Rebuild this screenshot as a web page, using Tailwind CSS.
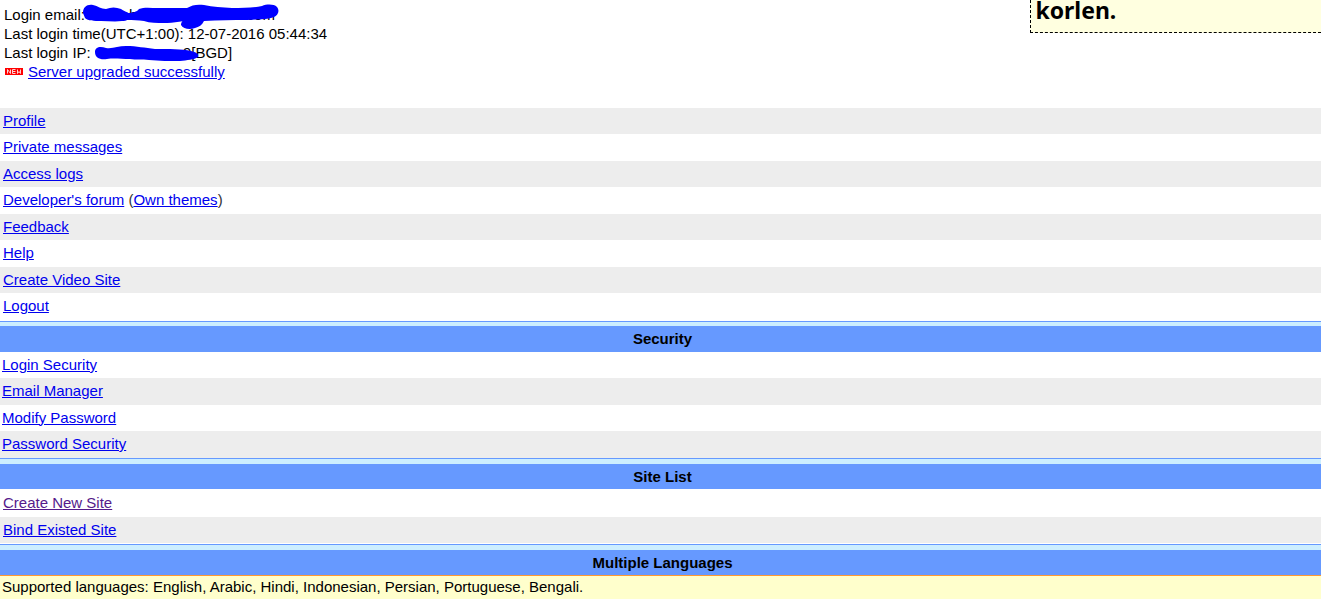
<!DOCTYPE html>
<html lang="en">

<head>
    <meta charset="UTF-8">
    <meta name="viewport" content="width=device-width, initial-scale=1.0">
    <title>My Account</title>
    <script src="https://cdn.jsdelivr.net/npm/@tailwindcss/browser@4"></script>
</head>

<body class="bg-white text-black text-[15px] leading-[19px] font-['Liberation_Sans',Arial,sans-serif]">
    <!-- Account info -->
    <header class="flex justify-between items-start min-h-[108px]">
        <div class="relative pt-[5px] pl-[4px]">
            <p>Login email: <span class="pl-[40px]">b</span><span class="pl-[105px]">.com</span></p>
            <p>Last login time(UTC+1:00): 12-07-2016 05:44:34</p>
            <p>Last login IP: <span class="pl-[88px]">9</span>[BGD]</p>
            <p class="flex items-center gap-[5px]">
                <svg class="w-[19px] h-[7px]" viewBox="0 0 19 7" role="img" aria-label="New">
                    <rect x="1" width="18" height="7" fill="#ff0000" />
                    <path d="M3.5 5.5v-4l3 4v-4M11.5 1.500h-3v4h3M8.500 3.500h3M13.500 1.500v4l1.500-2 1.500 2v-4" fill="none" stroke="#ffd0d0" stroke-width="1" />
                </svg>
                <a href="#" class="text-[#0000ee] underline">Server upgraded successfully</a>
            </p>
            <!-- Marker strokes over the private details -->
            <svg class="absolute left-0 top-0 w-[290px] h-[66px]" viewBox="0 0 290 66" fill="#0000ff" aria-hidden="true">
                <path d="M83 13C83 7 87 4 93 5C98 6 101 9 106 9C111 7 116 7 121 9C125 12 129 12 130 15C130 19 127 21 122 21C115 22 108 21 101 21C94 21 88 21 85 18Z" />
                <path d="M127 13C132 13 137 12 139 9C144 7 151 8 158 8C168 8 177 8 187 8C192 5 197 4 204 5C213 7 222 7 232 8C243 8 253 8 262 6C267 4 274 4 277 7C280 11 278 15 274 17C267 20 257 19 247 20C233 20 218 20 204 21C202 25 199 27 195 28C190 30 183 29 181 25C181 21 184 20 189 19C187 21 173 23 164 23C157 23 150 23 144 21C138 20 133 20 127 20Z" />
                <path d="M95 52C95 47 100 46 106 48C113 49 118 46 126 46C137 46 145 48 155 49C169 49 182 49 191 51C196 52 199 54 198 57C194 60 187 60 180 61C170 61 159 61 149 60C142 59 136 60 130 59C121 59 114 58 107 59C100 60 95 58 95 52Z" />
            </svg>
        </div>
        <aside class="w-[22%] h-[33px] pl-[4px] bg-[#ffffe0] border-l border-b border-dashed border-black">
            <p class="text-[23px] leading-[20px] font-bold font-['Noto_Sans',sans-serif]">korlen.</p>
        </aside>
    </header>

    <!-- Account menu -->
    <nav class="text-[#0000ee]">
        <ul>
            <li class="h-[26px] flex items-center px-[3px] pb-[2px] bg-[#ededed]"><a href="#" class="underline">Profile</a></li>
            <li class="h-[27px] flex items-center px-[3px] pb-[2px]"><a href="#" class="underline">Private messages</a></li>
            <li class="h-[26px] flex items-center px-[3px] pb-[2px] bg-[#ededed]"><a href="#" class="underline">Access logs</a></li>
            <li class="h-[27px] flex items-center px-[3px] pb-[2px]">
                <p><a href="#" class="underline">Developer's forum</a> <span class="text-[#333333]">(</span><a href="#" class="underline">Own themes</a><span class="text-[#333333]">)</span></p>
            </li>
            <li class="h-[26px] flex items-center px-[3px] pb-[2px] bg-[#ededed]"><a href="#" class="underline">Feedback</a></li>
            <li class="h-[27px] flex items-center px-[3px] pb-[2px]"><a href="#" class="underline">Help</a></li>
            <li class="h-[26px] flex items-center px-[3px] pb-[2px] bg-[#ededed]"><a href="#" class="underline">Create Video Site</a></li>
            <li class="h-[28px] flex items-center px-[3px] pb-[4px]"><a href="#" class="underline">Logout</a></li>
        </ul>
    </nav>

    <!-- Security -->
    <section>
        <div class="h-[5px] border-t border-[#6699ff] bg-[#cceeff]"></div>
        <h2 class="h-[26px] pl-[4px] pb-[2px] flex items-center justify-center bg-[#6699ff] font-bold">Security</h2>
        <ul class="text-[#0000ee]">
            <li class="h-[26px] flex items-center px-[2px] pb-[2px]"><a href="#" class="underline">Login Security</a></li>
            <li class="h-[27px] flex items-center px-[2px] pb-[2px] bg-[#ededed]"><a href="#" class="underline">Email Manager</a></li>
            <li class="h-[26px] flex items-center px-[2px] pb-[2px]"><a href="#" class="underline">Modify Password</a></li>
            <li class="h-[27px] flex items-center px-[2px] pb-[2px] bg-[#ededed]"><a href="#" class="underline">Password Security</a></li>
        </ul>
    </section>

    <!-- Site list -->
    <section>
        <div class="h-[6px] border-t border-[#6699ff] bg-[#cceeff]"></div>
        <h2 class="h-[25px] pl-[4px] flex items-center justify-center bg-[#6699ff] font-bold">Site List</h2>
        <ul class="text-[#0000ee] pb-px">
            <li class="h-[28px] flex items-center px-[3px] pb-[2px]"><a href="#" class="underline text-[#551a8b]">Create New Site</a></li>
            <li class="h-[26px] flex items-center px-[3px] pb-[2px] bg-[#ededed]"><a href="#" class="underline">Bind Existed Site</a></li>
        </ul>
    </section>

    <!-- Languages -->
    <section>
        <div class="h-[6px] border-t border-[#6699ff] bg-[#cceeff]"></div>
        <h2 class="h-[25px] pl-[4px] flex items-center justify-center bg-[#6699ff] font-bold">Multiple Languages</h2>
        <p class="h-[24px] px-[2px] pt-px border-t border-[#ff9933] bg-[#ffffcc]">Supported languages: English, Arabic, Hindi, Indonesian, Persian, Portuguese, Bengali.</p>
    </section>
</body>

</html>
